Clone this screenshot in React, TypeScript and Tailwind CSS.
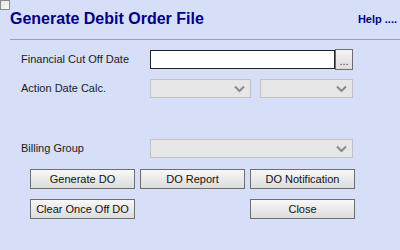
const Chevron = () => (
  <svg width="11" height="7" viewBox="0 0 11 7" className="absolute right-[5px] top-1/2 -translate-y-1/2">
    <polyline points="1,1 5.5,5.5 10,1" fill="none" stroke="#8a8a8a" strokeWidth="2" />
  </svg>
)

const Select = ({ width }: { width: string }) => (
  <div className={`relative h-[19px] ${width} border border-[#c2c2c2] bg-[#e6e6e6]`}>
    <Chevron />
  </div>
)

const Button = ({ label }: { label: string }) => (
  <button className="h-[20px] w-[105px] border border-[#6e6e6e] bg-gradient-to-b from-[#f8f8f8] to-[#dcdcdc] text-[11px] leading-none text-[#111]">
    {label}
  </button>
)

export default function App() {
  return (
    <div className="w-[400px] h-[250px] bg-[#d7dff8] font-['Liberation_Sans',Arial,sans-serif] text-[#1a1a1a]">
      <div className="h-[10px] w-[10px] border border-[#8c8c8c] bg-gradient-to-br from-[#e2e2e2] to-[#fafafa]" />
      <div className="ml-[10px] flex h-[30px] items-center justify-between border-b border-[#a0a0a0] pb-[11px] pr-[3px]">
        <h1 className="text-[16px] font-bold leading-none text-[#00007f]">Generate Debit Order File</h1>
        <span className="text-[11px] font-bold leading-none text-[#00007f]">Help ....</span>
      </div>

      <div className="pl-[21px] pt-[9px]">
        <div className="flex h-[21px] items-center">
          <span className="w-[129px] text-[11px]">Financial Cut Off Date</span>
          <div className="h-[19px] w-[185px] border border-[#222] bg-white" />
          <button className="h-[21px] w-[18px] border border-[#6e6e6e] bg-gradient-to-b from-[#f4f4f4] to-[#dcdcdc] pt-[3px] text-[11px] leading-none text-[#444]">
            ...
          </button>
        </div>
        <div className="mt-[9px] flex h-[19px] items-center">
          <span className="w-[129px] text-[11px]">Action Date Calc.</span>
          <Select width="w-[101px]" />
          <div className="w-[9px]" />
          <Select width="w-[93px]" />
        </div>
        <div className="mt-[41px] flex h-[19px] items-center">
          <span className="w-[129px] text-[11px]">Billing Group</span>
          <Select width="w-[203px]" />
        </div>
      </div>

      <div className="pl-[30px] pt-[11px]">
        <div className="flex gap-[5px]">
          <Button label="Generate DO" />
          <Button label="DO Report" />
          <Button label="DO Notification" />
        </div>
        <div className="mt-[10px] flex gap-[5px]">
          <Button label="Clear Once Off DO" />
          <div className="w-[105px]" />
          <Button label="Close" />
        </div>
      </div>
    </div>
  )
}
